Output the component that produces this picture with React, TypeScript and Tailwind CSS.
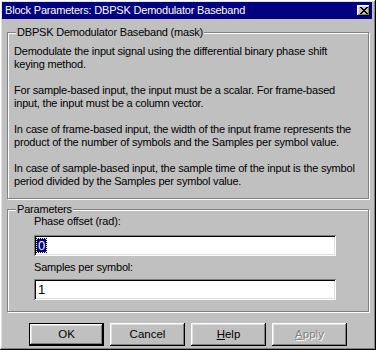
import React from "react";

const bevelOut =
  "shadow-[inset_-1px_-1px_0_#000,inset_1px_1px_0_#fff,inset_-2px_-2px_0_#808080,inset_2px_2px_0_#dfdfdf]";
const sunken =
  "shadow-[inset_1px_1px_0_#808080,inset_-1px_-1px_0_#fff,inset_2px_2px_0_#000,inset_-2px_-2px_0_#dfdfdf]";
const etched =
  "border border-[#808080] shadow-[1px_1px_0_#fff,inset_1px_1px_0_#fff]";

function GroupBox({ label, className, children }: { label: string; className: string; children: React.ReactNode }) {
  return (
    <div className={`relative ${etched} ${className}`}>
      <span className="absolute left-[8px] top-[-7px] bg-[#c0c0c0] px-[1px] leading-[13px]">{label}</span>
      {children}
    </div>
  );
}

function Button({ children, isDefault = false }: { children: React.ReactNode; isDefault?: boolean }) {
  return (
    <div
      className={`w-[75px] h-[23px] flex items-center justify-center ${
        isDefault ? "border border-black" : ""
      } ${bevelOut}`}
    >
      {children}
    </div>
  );
}

export default function App() {
  const desc = [
    ["Demodulate the input signal using the differential binary phase shift", "keying method."],
    ["For sample-based input, the input must be a scalar. For frame-based", "input, the input must be a column vector."],
    ["In case of frame-based input, the width of the input frame represents the", "product of the number of symbols and the Samples per symbol value."],
    ["In case of sample-based input, the sample time of the input is the symbol", "period divided by the Samples per symbol value."],
  ];

  return (
    <div className="w-[376px] h-[350px] bg-[#c0c0c0] text-black text-[11px] tracking-[-0.2px] font-['Liberation_Sans',Arial,sans-serif] overflow-hidden">
      <div className={`w-[376px] h-[350px] flex flex-col pt-[2px] pl-[2px] pr-[4px] ${bevelOut}`}>
        {/* title bar */}
        <div className="h-[17px] bg-[#000080] flex items-center justify-between pl-[3px] pr-[2px]">
          <span className="text-white text-[11px] tracking-[-0.2px] leading-[17px] whitespace-nowrap">
            Block Parameters: DBPSK Demodulator Baseband
          </span>
          <div className={`w-[13px] h-[11px] bg-[#c0c0c0] flex items-center justify-center ${bevelOut}`}>
            <svg width="8" height="7" viewBox="0 0 8 7" shapeRendering="crispEdges">
              <path d="M0 0h2v1h-2zM6 0h2v1h-2zM1 1h2v1h-2zM5 1h2v1h-2zM2 2h4v1h-4zM3 3h2v1h-2zM2 4h4v1h-4zM1 5h2v1h-2zM5 5h2v1h-2zM0 6h2v1h-2zM6 6h2v1h-2z" fill="#000" />
            </svg>
          </div>
        </div>

        <div className="flex flex-col pl-[5px] pr-[3px]">
          <GroupBox label="DBPSK Demodulator Baseband (mask)" className="mt-[13px] h-[167px] pl-[6px] pt-[12px]">
            <div className="flex flex-col gap-[13px] leading-[13px] whitespace-nowrap">
              {desc.map((p, i) => (
                <div key={i}>
                  <div>{p[0]}</div>
                  <div>{p[1]}</div>
                </div>
              ))}
            </div>
          </GroupBox>

          <GroupBox label="Parameters" className="mt-[10px] h-[103px] pl-[26px] pt-[5px]">
            <div className="leading-[13px]">Phase offset (rad):</div>
            <div className={`mt-[7px] w-[302px] h-[21px] bg-white flex items-center pl-[3px] ${sunken}`}>
              <span className="bg-[#000080] text-white text-[13px] leading-[13px] px-[1px] outline-1 outline-dotted outline-black">0</span>
            </div>
            <div className="mt-[5px] leading-[13px]">Samples per symbol:</div>
            <div className={`mt-[5px] w-[302px] h-[21px] bg-white flex items-center pl-[4px] ${sunken}`}>
              <span className="text-[13px] leading-[13px]">1</span>
            </div>
          </GroupBox>

          <div className="mt-[11px] pl-[22px] flex gap-[6px] text-[11.5px] tracking-normal">
            <Button isDefault>OK</Button>
            <Button>Cancel</Button>
            <Button>
              <span>
                <span className="underline">H</span>elp
              </span>
            </Button>
            <Button>
              <span className="text-[#808080] [text-shadow:1px_1px_0_#fff]">
                <span className="underline">A</span>pply
              </span>
            </Button>
          </div>
        </div>
      </div>
    </div>
  );
}
